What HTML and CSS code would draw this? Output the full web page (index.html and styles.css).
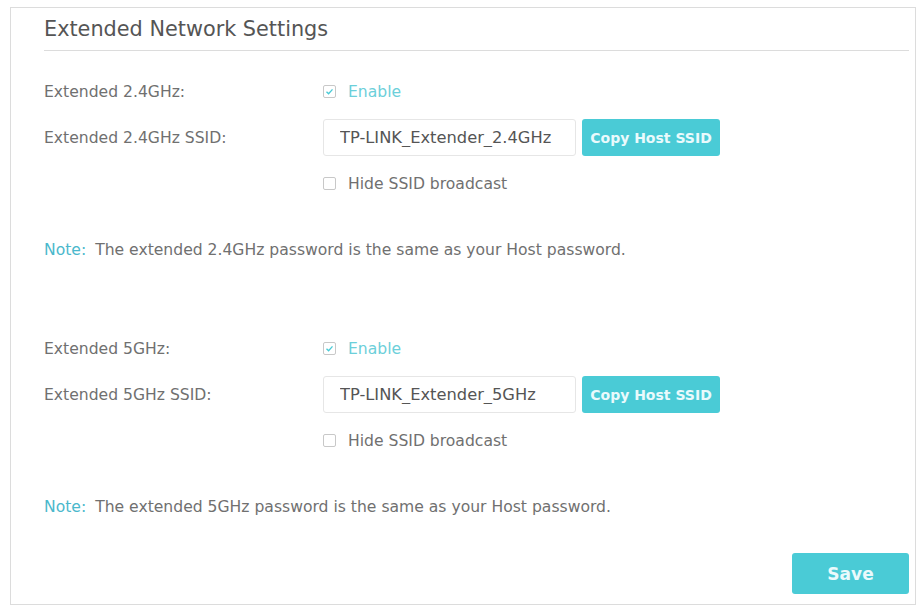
FILE: index.html
```html
<!DOCTYPE html>
<html lang="en">

<head>
  <meta charset="UTF-8" />
  <meta name="viewport" content="width=device-width, initial-scale=1.0" />
  <title>Extended Network Settings</title>
  <link rel="stylesheet" href="styles.css">
</head>

<body>
  <div class="panel">
    <h2 class="panel-title">Extended Network Settings</h2>

    <div class="section">
      <div class="row">
        <div class="label">Extended 2.4GHz:</div>
        <label class="check checked"><span class="box"><svg viewBox="0 0 12 12" width="9" height="9"><path d="M2 6.2 L4.8 9 L10 3.2" fill="none" stroke="#4acbd6" stroke-width="1.8"/></svg></span> Enable</label>
      </div>
      <div class="row">
        <div class="label">Extended 2.4GHz SSID:</div>
        <input class="ssid" type="text" value="TP-LINK_Extender_2.4GHz">
        <button class="btn">Copy Host SSID</button>
      </div>
      <div class="row">
        <div class="label"></div>
        <label class="check"><span class="box"></span> Hide SSID broadcast</label>
      </div>
    </div>
    <p class="note"><span>Note:</span> The extended 2.4GHz password is the same as your Host password.</p>

    <div class="section second">
      <div class="row">
        <div class="label">Extended 5GHz:</div>
        <label class="check checked"><span class="box"><svg viewBox="0 0 12 12" width="9" height="9"><path d="M2 6.2 L4.8 9 L10 3.2" fill="none" stroke="#4acbd6" stroke-width="1.8"/></svg></span> Enable</label>
      </div>
      <div class="row">
        <div class="label">Extended 5GHz SSID:</div>
        <input class="ssid" type="text" value="TP-LINK_Extender_5GHz">
        <button class="btn">Copy Host SSID</button>
      </div>
      <div class="row">
        <div class="label"></div>
        <label class="check"><span class="box"></span> Hide SSID broadcast</label>
      </div>
    </div>
    <p class="note"><span>Note:</span> The extended 5GHz password is the same as your Host password.</p>

    <div class="actions">
      <button class="btn save">Save</button>
    </div>
  </div>
</body>

</html>
```

FILE: styles.css
```css
body {
  margin: 0;
  padding: 0;
  background: #fff;
  font-family: 'DejaVu Sans', sans-serif;
  color: #707070;
}

.panel {
  margin: 7px 5px 0 10px;
  height: 598px;
  box-sizing: border-box;
  border: 1px solid #dcdcdc;
  padding: 0 6px 0 33px;
}

.panel-title {
  margin: 0;
  height: 42px;
  line-height: 42px;
  font-size: 20.8px;
  font-weight: normal;
  color: #555;
  border-bottom: 1px solid #dcdcdc;
}

.section {
  display: flex;
  flex-direction: column;
  gap: 9px;
  margin-top: 22px;
}

.section.second {
  margin-top: 70px;
}

.row {
  display: flex;
  align-items: center;
  height: 37px;
}

.label {
  width: 279px;
  font-size: 15.6px;
}

.check {
  display: flex;
  align-items: center;
  gap: 12px;
  font-size: 15.6px;
  color: #707070;
}

.check.checked {
  color: #6ccfda;
}

.box {
  width: 11px;
  height: 11px;
  border: 1px solid #c8c8c8;
  border-radius: 2px;
  display: flex;
  align-items: center;
  justify-content: center;
}

.ssid {
  width: 253px;
  height: 37px;
  box-sizing: border-box;
  border: 1px solid #e6e6e6;
  border-radius: 3px;
  padding: 0 0 0 16px;
  font-family: 'DejaVu Sans', sans-serif;
  font-size: 16.3px;
  color: #555;
  outline: none;
}

.btn {
  margin-left: 6px;
  width: 138px;
  height: 37px;
  padding: 0;
  border: none;
  border-radius: 3px;
  background: #4acbd6;
  color: #eafafc;
  font-family: 'DejaVu Sans', sans-serif;
  font-size: 14px;
  font-weight: bold;
  cursor: pointer;
}

.note {
  margin: 38px 0 0;
  line-height: 20px;
  font-size: 15.6px;
}

.note span {
  color: #4ab8cc;
  margin-right: 4px;
}

.actions {
  display: flex;
  justify-content: flex-end;
  margin-top: 36px;
}

.btn.save {
  width: 117px;
  height: 41px;
  font-size: 17px;
}
```
